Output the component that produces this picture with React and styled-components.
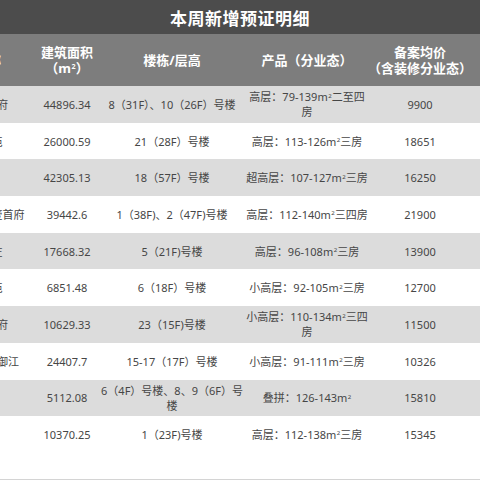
import styled, { createGlobalStyle } from 'styled-components'

const GlobalStyle = createGlobalStyle`
  html, body {
    margin: 0;
    padding: 0;
    background: #fff;
    overflow: hidden;
  }
  body {
    font-family: "Noto Sans", "Noto Sans CJK SC", sans-serif;
  }
`

const rows = [
  { name: '中梁天宸华府', area: '44896.34', building: '8（31F）、10（26F）号楼', product: '高层：79-139', tail: '二至四房', price: '9900' },
  { name: '金茂悦宸苑', area: '26000.59', building: '21（28F）号楼', product: '高层：113-126', tail: '三房', price: '18651' },
  { name: '国际中心', area: '42305.13', building: '18（57F）号楼', product: '超高层：107-127', tail: '三房', price: '16250' },
  { name: '越秀华润城市壹首府', area: '39442.6', building: '1（38F)、2（47F)号楼', product: '高层：112-140', tail: '三四房', price: '21900' },
  { name: '龙湖春江庄', area: '17668.32', building: '5（21F)号楼', product: '高层：96-108', tail: '三房', price: '13900' },
  { name: '碧桂园映苑', area: '6851.48', building: '6（18F）号楼', product: '小高层：92-105', tail: '三房', price: '12700' },
  { name: '绿城桂语云府', area: '10629.33', building: '23（15F)号楼', product: '小高层：110-134', tail: '三四房', price: '11500' },
  { name: '滨江金茂壹号御江', area: '24407.7', building: '15-17（17F）号楼', product: '小高层：91-111', tail: '三房', price: '10326' },
  { name: '云墅', area: '5112.08', building: '6（4F）号楼、8、9（6F）号楼', product: '叠拼：126-143', tail: '', price: '15810' },
  { name: '公馆', area: '10370.25', building: '1（23F)号楼', product: '高层：112-138', tail: '三房', price: '15345' },
]

const Page = styled.div`
  width: 480px;
  height: 480px;
  overflow: hidden;
  background: #fff;
  border-bottom: 1px solid #d4d4d4;
  box-sizing: border-box;
`

const Title = styled.div`
  height: 34px;
  background: #4c4c4c;
  color: #fff;
  font-size: 17px;
  font-weight: 700;
  display: flex;
  align-items: center;
  justify-content: center;
  letter-spacing: 0.5px;
`

const Table = styled.div`
  width: 566px;
  margin-left: -86px;
`

const Row = styled.div`
  display: grid;
  grid-template-columns: 122px 62px 148px 122px 104px 8px;
  height: ${(p) => (p.$head ? '52px' : '36.7px')};
  background: ${(p) => (p.$head ? '#7d7d7d' : p.$shade ? '#dcdcdc' : '#fff')};
  color: ${(p) => (p.$head ? '#fff' : '#464646')};
  font-size: ${(p) => (p.$head ? '13px' : '11px')};
  font-weight: ${(p) => (p.$head ? 700 : 400)};
  line-height: ${(p) => (p.$head ? '16px' : '15px')};
`

const Cell = styled.div`
  display: flex;
  align-items: center;
  justify-content: center;
  text-align: center;
  min-width: 0;
`

const Text = styled.span`
  display: block;
  white-space: ${(p) => (p.$nowrap ? 'nowrap' : 'normal')};
`

const Sup = styled.span`
  font-size: 0.55em;
  vertical-align: 0.6em;
  line-height: 0;
  margin-left: 0.5px;
`

const Unit = () => (
  <>
    m<Sup>2</Sup>
  </>
)

export default function App() {
  return (
    <>
      <GlobalStyle />
      <Page>
        <Title>本周新增预证明细</Title>
        <Table>
          <Row $head>
            <Cell>
              <Text $nowrap>项目名称</Text>
            </Cell>
            <Cell>
              <Text $nowrap>
                建筑面积
                <br />（<Unit />）
              </Text>
            </Cell>
            <Cell>
              <Text $nowrap>楼栋/层高</Text>
            </Cell>
            <Cell>
              <Text $nowrap>产品（分业态）</Text>
            </Cell>
            <Cell>
              <Text $nowrap>
                备案均价
                <br />（含装修分业态）
              </Text>
            </Cell>
            <Cell />
          </Row>
          {rows.map((r, i) => (
            <Row key={r.name} $shade={i % 2 === 0}>
              <Cell>
                <Text $nowrap>{r.name}</Text>
              </Cell>
              <Cell>
                <Text>{r.area}</Text>
              </Cell>
              <Cell>
                <Text>{r.building}</Text>
              </Cell>
              <Cell>
                <Text>
                  {r.product}
                  <Unit />
                  {r.tail}
                </Text>
              </Cell>
              <Cell>
                <Text>{r.price}</Text>
              </Cell>
              <Cell />
            </Row>
          ))}
        </Table>
      </Page>
    </>
  )
}
